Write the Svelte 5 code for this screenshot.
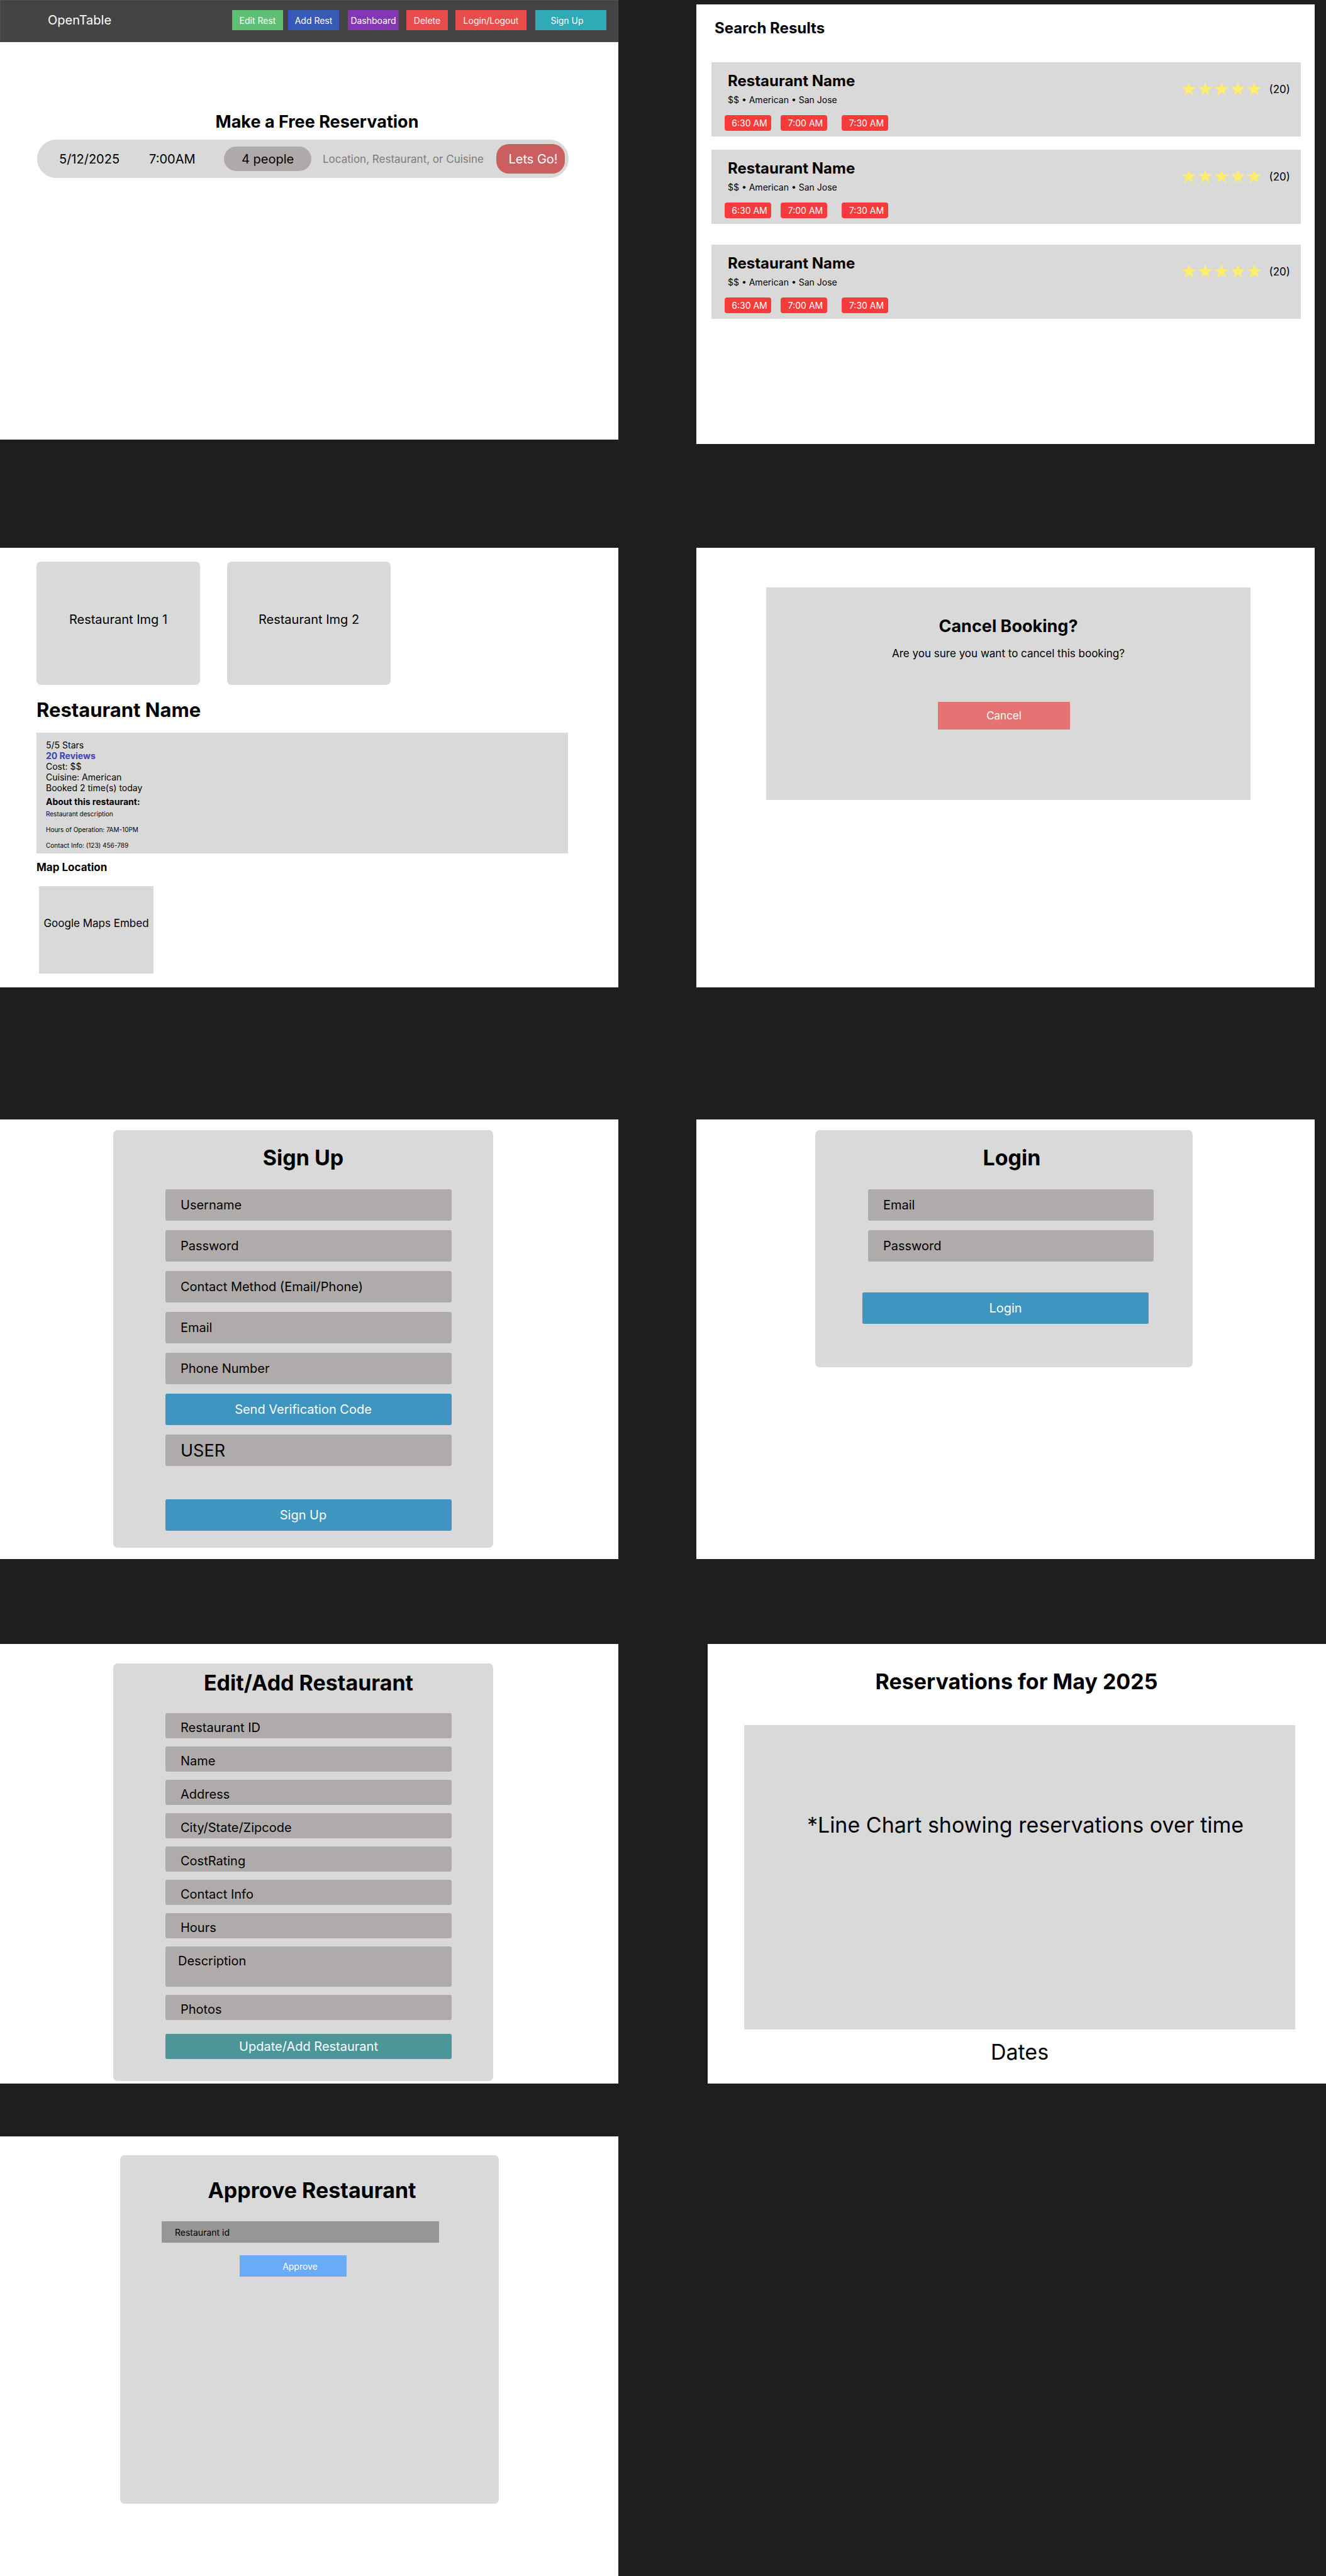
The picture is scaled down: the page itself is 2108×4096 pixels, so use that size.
<script>
  const navItems = [
    { label: 'Edit Rest', tone: 'green' },
    { label: 'Add Rest', tone: 'blue' },
    { label: 'Dashboard', tone: 'purple' },
    { label: 'Delete', tone: 'red narrow' },
    { label: 'Login/Logout', tone: 'red wide' },
    { label: 'Sign Up', tone: 'teal wide' }
  ];
  const results = [1, 2, 3];
  const times = ['6:30 AM', '7:00 AM', '7:30 AM'];
  const stars = [1, 2, 3, 4, 5];
  const restaurantFields = [
    'Restaurant ID',
    'Name',
    'Address',
    'City/State/Zipcode',
    'CostRating',
    'Contact Info',
    'Hours'
  ];
</script>

<main class="board">
  <div class="row row-home">
    <section class="screen">
      <header class="topbar">
        <a class="brand" href="#home">OpenTable</a>
        <nav>
          {#each navItems as item}
            <button class="nav-btn {item.tone}">{item.label}</button>
          {/each}
        </nav>
      </header>
      <div class="hero">
        <h2 class="medium-title">Make a Free Reservation</h2>
        <form class="search">
          <input class="date" aria-label="Date" value="5/12/2025" />
          <input class="time" aria-label="Time" value="7:00AM" />
          <select class="people" aria-label="Party size">
            <option>4 people</option>
          </select>
          <input class="query" aria-label="Search" placeholder="Location, Restaurant, or Cuisine" />
          <button class="go" type="button">Lets Go!</button>
        </form>
      </div>
    </section>

    <section class="screen results">
      <h2>Search Results</h2>
      {#each results as result}
        <article class="result">
          <div>
            <h3>Restaurant Name</h3>
            <p>$$ • American • San Jose</p>
            <div class="times">
              {#each times as time}
                <button>{time}</button>
              {/each}
            </div>
          </div>
          <div class="rating">
            {#each stars as star}
              <svg viewBox="0 0 24 22" aria-hidden="true">
                <path d="M12 0 14.7 8.3H23.6L16.4 13.4 19.2 21.9 12 16.6 4.8 21.9 7.6 13.4 0.4 8.3H9.3Z" />
              </svg>
            {/each}
            <span>(20)</span>
          </div>
        </article>
      {/each}
    </section>
  </div>

  <div class="row row-detail">
    <section class="screen detail">
      <div class="images">
        <div class="image">Restaurant Img 1</div>
        <div class="image">Restaurant Img 2</div>
      </div>
      <h2>Restaurant Name</h2>
      <div class="info">
        <p>5/5 Stars</p>
        <p><a href="#reviews">20 Reviews</a></p>
        <p>Cost: $$</p>
        <p>Cuisine: American</p>
        <p>Booked 2 time(s) today</p>
        <h3>About this restaurant:</h3>
        <div class="notes">
          <p>Restaurant description</p>
          <p>Hours of Operation: 7AM-10PM</p>
          <p>Contact Info: (123) 456-789</p>
        </div>
      </div>
      <h3 class="map-title">Map Location</h3>
      <div class="map">Google Maps Embed</div>
    </section>

    <section class="screen">
      <div class="cancel">
        <h2 class="medium-title">Cancel Booking?</h2>
        <p>Are you sure you want to cancel this booking?</p>
        <button>Cancel</button>
      </div>
    </section>
  </div>

  <div class="row row-account">
    <section class="screen">
      <form class="panel signup">
        <h2 class="large-title">Sign Up</h2>
        <input class="field" aria-label="Username" placeholder="Username" />
        <input class="field" type="password" aria-label="Password" placeholder="Password" />
        <select class="field" aria-label="Contact Method">
          <option>Contact Method (Email/Phone)</option>
        </select>
        <input class="field" type="email" aria-label="Email" placeholder="Email" />
        <input class="field" type="tel" aria-label="Phone Number" placeholder="Phone Number" />
        <button class="action" type="button">Send Verification Code</button>
        <select class="field role" aria-label="Role">
          <option>USER</option>
        </select>
        <button class="action submit" type="button">Sign Up</button>
      </form>
    </section>

    <section class="screen">
      <form class="panel login">
        <h2 class="large-title">Login</h2>
        <input class="field" type="email" aria-label="Email" placeholder="Email" />
        <input class="field" type="password" aria-label="Password" placeholder="Password" />
        <button class="action" type="button">Login</button>
      </form>
    </section>
  </div>

  <div class="row row-manage">
    <section class="screen">
      <form class="panel editor">
        <h2 class="large-title">Edit/Add Restaurant</h2>
        {#each restaurantFields as name}
          <input class="field" aria-label={name} placeholder={name} />
        {/each}
        <textarea class="field" aria-label="Description" placeholder="Description"></textarea>
        <input class="field" aria-label="Photos" placeholder="Photos" />
        <button class="action" type="button">Update/Add Restaurant</button>
      </form>
    </section>

    <section class="screen dashboard">
      <h2 class="large-title">Reservations for May 2025</h2>
      <figure>
        <div class="chart">*Line Chart showing reservations over time</div>
        <figcaption>Dates</figcaption>
      </figure>
    </section>
  </div>

  <div class="row">
    <section class="screen">
      <form class="panel approve">
        <h2 class="large-title">Approve Restaurant</h2>
        <input class="id" aria-label="Restaurant id" placeholder="Restaurant id" />
        <button type="button">Approve</button>
      </form>
    </section>
  </div>
</main>

<style>
  :global(body) {
    margin: 0;
    background: #1e1e1e;
  }

  .board {
    font-family: Inter, "Liberation Sans", sans-serif;
    font-size: 14px;
    line-height: 17px;
    color: #000;
  }

  .board * {
    box-sizing: border-box;
  }

  h2,
  h3,
  p,
  figure {
    margin: 0;
  }

  button,
  input,
  select,
  textarea {
    margin: 0;
    padding: 0;
    border: 0;
    border-radius: 0;
    background: none;
    font: inherit;
    color: inherit;
    appearance: none;
    min-width: 0;
  }

  button {
    color: #fff;
    text-align: center;
    white-space: nowrap;
  }

  ::placeholder {
    color: inherit;
    opacity: 1;
  }

  /* Board rows */
  .row {
    display: flex;
    justify-content: space-between;
    align-items: flex-start;
    padding-right: 18px;
  }

  .row-home {
    margin-bottom: 165px;
  }

  .row-detail {
    margin-bottom: 210px;
  }

  .row-account {
    margin-bottom: 135px;
  }

  .row-manage {
    margin-bottom: 84px;
    padding-right: 0;
  }

  .screen {
    display: flow-root;
    flex: none;
    width: calc(100vw * 983 / 2108);
    min-height: 699px;
    background: #fff;
  }

  .medium-title {
    font-size: 27px;
    line-height: 33px;
    font-weight: 700;
    text-align: center;
  }

  .large-title {
    font-size: 34px;
    line-height: 41px;
    font-weight: 700;
    text-align: center;
  }

  /* Home */
  .topbar {
    display: flex;
    justify-content: space-between;
    align-items: flex-start;
    height: 67px;
    padding: 15px 18px 0 75px;
    border: 1px solid #505050;
    background: #444;
  }

  .brand {
    font-size: 20px;
    line-height: 32px;
    color: #fff;
    text-decoration: none;
  }

  nav {
    display: flex;
  }

  .nav-btn {
    width: 81px;
    height: 32px;
    margin-left: 12px;
  }

  .narrow {
    width: 66px;
  }

  .wide {
    width: 113px;
  }

  .green {
    background: #5fbf74;
  }

  .blue {
    margin-left: 8px;
    background: #375bb5;
  }

  .purple {
    margin-left: 14px;
    background: #8436b5;
  }

  .red {
    background: #ea4c4c;
  }

  .teal {
    margin-left: 14px;
    padding-right: 12px;
    background: #31aab7;
  }

  .hero {
    padding: 110px 79px 0 59px;
  }

  .hero .medium-title {
    margin-bottom: 12px;
    padding-left: 45px;
  }

  .search {
    display: flex;
    align-items: center;
    height: 61px;
    padding: 0 6px 0 35px;
    border-radius: 31px;
    background: #d9d9d9;
    font-size: 20px;
    line-height: 24px;
  }

  .date {
    width: 143px;
  }

  .time {
    width: 119px;
  }

  .people {
    width: 139px;
    height: 39px;
    padding-left: 28px;
    border-radius: 20px;
    background: #afaaa9;
  }

  .query {
    flex: 1;
    margin-left: 18px;
    font-size: 17px;
    color: #7c7c7c;
  }

  .go {
    width: 109px;
    height: 47px;
    padding-left: 8px;
    border-radius: 20px;
    background: #cb5f5f;
  }

  /* Search results */
  .results {
    margin-top: 7px;
    padding: 23px 22px 0 24px;
  }

  .results h2 {
    margin-bottom: 40px;
    padding-left: 5px;
    font-size: 24px;
    line-height: 29px;
  }

  .result {
    display: flex;
    justify-content: space-between;
    align-items: flex-start;
    margin-bottom: 21px;
    padding: 15px 17px 9px 21px;
    background: #d9d9d9;
  }

  .result:last-child {
    margin: 33px 0 0;
  }

  .result h3 {
    margin-bottom: 7px;
    padding-left: 5px;
    font-size: 24px;
    line-height: 29px;
  }

  .result p {
    margin-bottom: 16px;
    padding-left: 5px;
  }

  .times {
    display: flex;
    gap: 15px;
  }

  .times button {
    width: 74px;
    height: 25px;
    padding-left: 5px;
    border-radius: 4px;
    background: #f93a3a;
  }

  .times button:last-child {
    margin-left: 8px;
  }

  .rating {
    display: flex;
    align-items: center;
    gap: 2px;
    height: 24px;
    margin-top: 15px;
    font-size: 17px;
    line-height: 21px;
  }

  .rating svg {
    width: 24px;
    height: 22px;
    fill: #ffee6b;
  }

  .rating span {
    margin-left: 10px;
    padding-top: 2px;
  }

  /* Restaurant page */
  .detail {
    padding: 22px 80px 0 58px;
  }

  .images {
    display: flex;
    gap: 43px;
  }

  .image {
    display: grid;
    place-items: center;
    width: 260px;
    height: 196px;
    padding-bottom: 12px;
    border-radius: 7px;
    background: #d9d9d9;
    font-size: 20px;
  }

  .detail h2 {
    margin: 21px 0 17px;
    font-size: 31px;
    line-height: 38px;
  }

  .info {
    padding: 11px 15px 7px;
    background: #d9d9d9;
  }

  .info a {
    font-weight: 700;
    color: #3c44b8;
    text-decoration: none;
  }

  .info h3 {
    margin: 5px 0;
    font-size: 14px;
  }

  .notes {
    display: grid;
    gap: 13px;
    font-size: 10px;
    line-height: 12px;
  }

  .map-title {
    margin: 12px 0 19px;
    font-size: 17px;
    line-height: 21px;
  }

  .map {
    display: grid;
    place-items: center;
    width: 182px;
    height: 139px;
    margin-left: 4px;
    padding-bottom: 20px;
    background: #d9d9d9;
    font-size: 17px;
    white-space: nowrap;
  }

  /* Cancel booking */
  .cancel {
    display: flex;
    flex-direction: column;
    align-items: center;
    margin: 63px 102px 0 111px;
    padding: 45px 0 112px;
    background: #d9d9d9;
    font-size: 17px;
    line-height: 21px;
  }

  .cancel p {
    margin: 17px 0 66px;
  }

  .cancel button {
    width: 210px;
    height: 44px;
    margin-right: 14px;
    background: #e57373;
  }

  /* Forms */
  .panel {
    display: flex;
    flex-direction: column;
    gap: 15px;
    margin: 17px 199px 0 180px;
    border-radius: 7px;
    background: #d9d9d9;
    font-size: 20px;
    line-height: 24px;
  }

  .field,
  .action {
    height: 50px;
    border-radius: 3px;
  }

  .field {
    padding-left: 24px;
    background: #afabaa;
  }

  .action {
    background: #3e95bf;
  }

  .signup {
    padding: 23px 66px 27px 83px;
  }

  .signup .large-title {
    margin-bottom: 15px;
    padding-right: 17px;
  }

  .signup .action {
    padding-right: 17px;
  }

  .role {
    font-size: 27px;
    line-height: 33px;
  }

  .submit {
    margin-top: 38px;
  }

  .login {
    margin: 17px 194px 0 189px;
    padding: 23px 62px 69px 75px;
  }

  .login .large-title {
    margin-bottom: 15px;
    padding-left: 12px;
  }

  .login .field {
    margin-left: 9px;
  }

  .login .action {
    margin: 34px 8px 0 0;
  }

  .editor {
    gap: 13px;
    margin-top: 31px;
    padding: 10px 66px 35px 83px;
  }

  .editor .large-title {
    margin-bottom: 15px;
  }

  .editor .field {
    height: 40px;
    padding-top: 6px;
  }

  .editor textarea.field {
    height: 64px;
    padding: 11px 0 0 20px;
    resize: none;
  }

  .editor .action {
    height: 40px;
    margin-top: 9px;
    background: #4b9699;
  }

  /* Dashboard */
  .dashboard {
    padding: 39px 49px 0 58px;
    font-size: 34px;
    line-height: 41px;
    text-align: center;
  }

  .dashboard .large-title {
    padding-right: 10px;
  }

  .chart {
    height: 484px;
    margin: 49px 0 15px;
    padding: 138px 0 0 18px;
    background: #d9d9d9;
  }

  /* Approve */
  .approve {
    gap: 0;
    margin: 30px 190px 0 191px;
    padding: 35px 95px 361px 66px;
    font-size: 14px;
    line-height: 17px;
  }

  .approve .large-title {
    margin-bottom: 29px;
    padding-left: 37px;
    white-space: nowrap;
  }

  .approve .id {
    height: 34px;
    margin-bottom: 20px;
    padding-left: 21px;
    background: #969696;
  }

  .approve button {
    width: 170px;
    height: 34px;
    margin-left: 124px;
    padding-left: 22px;
    background: #69abf7;
  }
</style>
